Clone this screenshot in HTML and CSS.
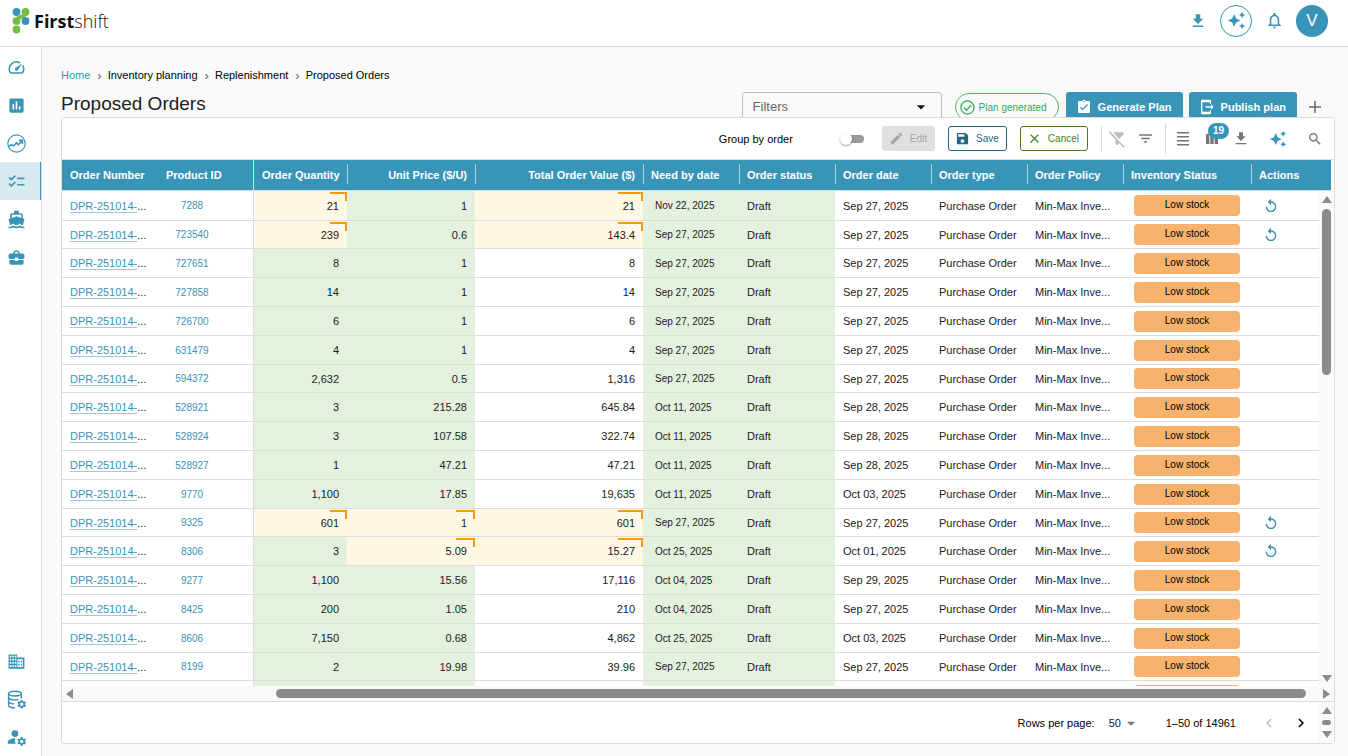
FILE: index.html
```html
<!DOCTYPE html>
<html lang="en">

<head>
    <meta charset="UTF-8">
    <meta name="viewport" content="width=device-width, initial-scale=1.0">
    <title>Proposed Orders</title>
    <link rel="stylesheet" href="styles.css">
</head>

<body>
    <header class="topbar">
        <a class="logo" href="#" aria-label="Firstshift">
            <svg width="18" height="26" viewBox="0 0 18 26">
                <path d="M13.5 4C13.5 11 4.500 7 4.500 13" stroke="#76bd43" stroke-width="4" fill="none" />
                <circle cx="4.500" cy="4" r="3.900" fill="#3895b8" />
                <circle cx="13.500" cy="4" r="3.900" fill="#76bd43" />
                <circle cx="4.500" cy="13" r="3.900" fill="#76bd43" />
                <circle cx="13.500" cy="13" r="3.900" fill="#3895b8" />
                <circle cx="4.500" cy="21.500" r="3.900" fill="#76bd43" />
            </svg>
            <span class="logo-text"><b>First</b>shift</span>
        </a>
        <div class="topbar-actions">
            <button class="top-btn" aria-label="Downloads">
                <svg width="18" height="18" viewBox="0 0 24 24"><path d="M5 20h14v-2H5v2zM19 9h-4V3H9v6H5l7 7 7-7z" /></svg>
            </button>
            <button class="top-btn ringed" aria-label="Assistant">
                <svg width="19" height="19" viewBox="0 0 24 24"><path d="M19 9l1.250-2.750L23 5l-2.750-1.250L19 1l-1.250 2.750L15 5l2.750 1.250L19 9zm-7.500.5L9 4 6.500 9.500 1 12l5.500 2.500L9 20l2.500-5.500L17 12l-5.500-2.500zM19 15l-1.250 2.750L15 19l2.750 1.250L19 23l1.250-2.750L23 19l-2.750-1.250L19 15z" /></svg>
            </button>
            <button class="top-btn" aria-label="Notifications">
                <svg width="19" height="19" viewBox="0 0 24 24"><path d="M12 22c1.100 0 2-.9 2-2h-4c0 1.100.89 2 2 2zm6-6v-5c0-3.070-1.640-5.640-4.500-6.320V4c0-.83-.67-1.500-1.500-1.500s-1.500.67-1.500 1.500v.68C7.630 5.360 6 7.920 6 11v5l-2 2v1h16v-1l-2-2zm-2 1H8v-6c0-2.480 1.510-4.500 4-4.500s4 2.020 4 4.500v6z" /></svg>
            </button>
            <button class="avatar">V</button>
        </div>
    </header>

    <div class="layout">
        <nav class="sidebar">
            <a href="#" aria-label="Dashboard"><svg viewBox="0 0 24 24"><path d="M20.380 8.570l-1.230 1.850a8 8 0 0 1-.22 7.580H5.070A8 8 0 0 1 15.580 6.850l1.850-1.230A10 10 0 0 0 3.350 19a2 2 0 0 0 1.720 1h13.850a2 2 0 0 0 1.740-1 10 10 0 0 0-.27-10.440zM10.590 15.410a2 2 0 0 0 2.830 0l5.660-8.490-8.490 5.660a2 2 0 0 0 0 2.830z" /></svg></a>
            <a href="#" aria-label="Reports"><svg viewBox="0 0 24 24"><path d="M19 3H5c-1.100 0-2 .9-2 2v14c0 1.100.9 2 2 2h14c1.100 0 2-.9 2-2V5c0-1.100-.9-2-2-2zM9 17H7v-7h2v7zm4 0h-2V7h2v10zm4 0h-2v-4h2v4z" /></svg></a>
            <a href="#" aria-label="Demand"><svg viewBox="0 0 24 24" class="line"><circle cx="12" cy="12" r="11" stroke-width="1.500" /><path d="M2 16l3.500-2.500 3 1.500 3.500-4 2.500 2.500L19 8.500M15 8h4.500v4.500" stroke-width="2" /></svg></a>
            <a href="#" class="active" aria-label="Inventory planning"><svg viewBox="0 0 24 24"><path d="M22 7h-9v2h9V7zm0 8h-9v2h9v-2zM5.540 11L2 7.460l1.410-1.410 2.120 2.120 4.240-4.240 1.410 1.410L5.540 11zm0 8L2 15.460l1.410-1.410 2.120 2.120 4.240-4.240 1.410 1.410L5.540 19z" /></svg></a>
            <a href="#" aria-label="Shipments"><svg viewBox="0 0 24 24"><path d="M20 21c-1.390 0-2.780-.47-4-1.320-2.440 1.710-5.560 1.710-8 0C6.780 20.530 5.390 21 4 21H2v2h2c1.380 0 2.740-.35 4-.99 2.520 1.290 5.480 1.290 8 0 1.260.65 2.620.99 4 .99h2v-2h-2zM3.950 19H4c1.600 0 3.020-.88 4-2 .98 1.120 2.400 2 4 2s3.020-.88 4-2c.98 1.120 2.400 2 4 2h.05l1.890-6.680c.08-.26.06-.54-.06-.78s-.34-.42-.6-.5L20 10.620V6c0-1.100-.9-2-2-2h-3V1H9v3H6c-1.100 0-2 .9-2 2v4.620l-1.290.42c-.26.08-.48.26-.6.5s-.15.52-.06.78L3.950 19zM6 6h12v3.970L12 8 6 9.970V6z" /></svg></a>
            <a href="#" aria-label="Business"><svg viewBox="0 0 24 24"><path d="M10 16v-1H3.010L3 19c0 1.110.89 2 2 2h14c1.110 0 2-.89 2-2v-4h-7v1h-4zm10-9h-4.010V5l-2-2h-4l-2 2v2H4c-1.100 0-2 .9-2 2v3c0 1.110.89 2 2 2h6v-2h4v2h6c1.100 0 2-.9 2-2V9c0-1.100-.9-2-2-2zm-6 0h-4V5h4v2z" /></svg></a>
            <div class="spacer"></div>
            <a href="#" aria-label="Company"><svg viewBox="0 0 24 24"><path fill-rule="evenodd" d="M2 3h11v4h9v14H2V3zm1.500 1.700v2.300h2V4.700h-2zm3.200 0v2.300h2V4.700h-2zm3.200 0v2.300h2V4.700h-2zM3.500 8.500v2.300h2V8.500h-2zm3.200 0v2.300h2V8.500h-2zm3.200 0v2.300h2V8.500h-2zM3.500 12.500v2.300h2v-2.300h-2zm3.200 0v2.300h2v-2.300h-2zm3.200 0v2.300h2v-2.300h-2zM3.500 16.700V19h2v-2.300h-2zm3.200 0V19h2v-2.300h-2zm3.200 0V19h2v-2.300h-2zM13.200 9v10H20V9h-6.800zm1 2h1.800v2h-1.800v-2zm3.300 0h1.500v2h-1.500v-2zm-3.300 4h1.800v2h-1.800v-2zm3.300 0h1.500v2h-1.500v-2z" /></svg></a>
            <a href="#" aria-label="Data settings"><svg viewBox="0 0 24 24"><g class="line" stroke-width="1.800"><ellipse cx="10" cy="4.500" rx="8" ry="3" /><path d="M2 4.500v15c0 1.500 3.500 3 8 3M18 4.500V11M2 9.500c0 1.500 3.500 3 8 3 2 0 3.500-.2 4.500-.6M2 14.500c0 1.500 3.500 3 7 3" /></g><path d="M22.750 18c0-.22-.03-.42-.06-.63l1.300-1.100-1.150-2-1.650.6c-.32-.27-.68-.48-1.080-.63L19.800 12.500h-2.400l-.3 1.740c-.4.15-.76.36-1.080.63l-1.650-.6-1.150 2 1.300 1.100c-.03.21-.06.41-.06.63s.03.42.06.63l-1.300 1.100 1.150 2 1.650-.6c.32.27.68.48 1.080.63l.3 1.740h2.400l.3-1.740c.4-.15.76-.36 1.080-.63l1.650.6 1.150-2-1.300-1.100c.04-.21.07-.41.07-.63zM18.600 20.100a2.100 2.100 0 1 1 0-4.200 2.100 2.100 0 0 1 0 4.200z" /></svg></a>
            <a href="#" aria-label="User settings"><svg viewBox="0 0 24 24"><circle cx="10" cy="7" r="4.300" /><path d="M10.670 13.020C10.450 13.010 10.230 13 10 13c-2.420 0-4.680.67-6.610 1.820C2 15.340 1 16.320 1 17.350V20h10.260C10.470 18.870 10 17.490 10 16c0-1.070.25-2.070.67-2.980z" /><path d="M22.750 17c0-.22-.03-.42-.06-.63l1.300-1.100-1.150-2-1.650.6c-.32-.27-.68-.48-1.080-.63L19.800 11.500h-2.400l-.3 1.740c-.4.15-.76.36-1.080.63l-1.650-.6-1.150 2 1.300 1.100c-.03.21-.06.41-.06.63s.03.42.06.63l-1.300 1.100 1.150 2 1.650-.6c.32.27.68.48 1.080.63l.3 1.740h2.400l.3-1.740c.4-.15.76-.36 1.080-.63l1.650.6 1.150-2-1.300-1.100c.04-.21.07-.41.07-.63zM18.600 19.100a2.100 2.100 0 1 1 0-4.200 2.100 2.100 0 0 1 0 4.200z" /></svg></a>
        </nav>

        <main>
            <div class="breadcrumb">
                <a href="#">Home</a><i>›</i><span>Inventory planning</span><i>›</i><span>Replenishment</span><i>›</i><span>Proposed Orders</span>
            </div>
            <div class="title-row">
                <h1>Proposed Orders</h1>
                <button class="filters">Filters <svg width="20" height="20" viewBox="0 0 24 24"><path d="M7 10l5 5 5-5z" /></svg></button>
                <div class="plan-state">
                    <svg width="15" height="15" viewBox="0 0 24 24"><circle cx="12" cy="12" r="10.500" /><path d="M6.500 12.500l4 4 7.500-8.500" /></svg>
                    Plan generated
                </div>
                <button class="primary"><svg width="16" height="16" viewBox="0 0 24 24"><path d="M19 3h-4.180C14.400 1.840 13.300 1 12 1c-1.300 0-2.400.84-2.820 2H5c-1.100 0-2 .9-2 2v14c0 1.100.9 2 2 2h14c1.100 0 2-.9 2-2V5c0-1.100-.9-2-2-2zm-7 0c.55 0 1 .45 1 1s-.45 1-1 1-1-.45-1-1 .45-1 1-1zm-2 14l-4-4 1.410-1.410L10 14.170l6.590-6.590L18 9l-8 8z" /></svg>Generate Plan</button>
                <button class="primary"><svg width="16" height="16" viewBox="0 0 24 24"><path d="M16 17h2v4c0 1.100-.9 2-2 2H5c-1.100 0-2-.9-2-2V3c0-1.100.9-2 2-2h11c1.100 0 2 .9 2 2v4h-2V5H5v14h11v-2zm6-5l-4-4v3H10v2h8v3l4-4z" /></svg>Publish plan</button>
                <button class="add" aria-label="Add"><svg width="12" height="12" viewBox="0 0 12 12"><path d="M6 0v12M0 6h12" stroke="#666" stroke-width="1.500" /></svg></button>
            </div>

            <section class="card">
                <div class="toolbar">
                    <label for="group">Group by order</label>
                    <input type="checkbox" id="group" class="switch">
                    <button class="tool edit" disabled><svg width="15" height="15" viewBox="0 0 24 24"><path d="M3 17.250V21h3.750L17.810 9.940l-3.750-3.750L3 17.250zM20.710 7.040c.39-.39.39-1.020 0-1.410l-2.340-2.340c-.39-.39-1.020-.39-1.410 0l-1.830 1.830 3.750 3.750 1.830-1.830z" /></svg>Edit</button>
                    <button class="tool save"><svg width="15" height="15" viewBox="0 0 24 24"><path d="M17 3H5c-1.110 0-2 .9-2 2v14c0 1.100.89 2 2 2h14c1.100 0 2-.9 2-2V7l-4-4zm-5 16c-1.660 0-3-1.340-3-3s1.340-3 3-3 3 1.340 3 3-1.340 3-3 3zm3-10H5V5h10v4z" /></svg>Save</button>
                    <button class="tool cancel"><svg width="15" height="15" viewBox="0 0 24 24"><path d="M19 6.410L17.590 5 12 10.590 6.410 5 5 6.410 10.590 12 5 17.590 6.410 19 12 13.410 17.590 19 19 17.590 13.410 12z" /></svg>Cancel</button>
                    <span class="divider"></span>
                    <button class="icon-btn muted" aria-label="Clear filters"><svg width="18" height="18" viewBox="0 0 24 24"><path d="M20.790 5.610C21.300 4.950 20.830 3 20 3H6.830l7.970 8.970 5.990-6.360zM2.810 1.810 1.390 3.220 10 12.830V18c0 1.100.9 2 2 2s2-.9 2-2v-1.170l6.780 6.780 1.410-1.410L2.810 1.810z" /></svg></button>
                    <button class="icon-btn" aria-label="Filter list"><svg width="17" height="17" viewBox="0 0 24 24"><path d="M10 18h4v-2h-4v2zM3 6v2h18V6H3zm3 7h12v-2H6v2z" /></svg></button>
                    <span class="divider tall"></span>
                    <button class="icon-btn" aria-label="Density"><svg width="12" height="14" viewBox="0 0 12 14"><path d="M0 0h12v1.500H0zM0 4h12v1.500H0zM0 8h12v1.500H0zM0 12h12v1.500H0z" /></svg></button>
                    <button class="icon-btn" aria-label="Columns"><svg width="12" height="10" viewBox="0 0 12 10"><path d="M0 0h3.300v10H0zM4.300 0h3.300v10H4.300zM8.600 0H12v10H8.600z" /></svg><span class="badge">19</span></button>
                    <button class="icon-btn" aria-label="Export"><svg width="16" height="16" viewBox="0 0 24 24"><path d="M4 20h16v-2H4v2zM19 8h-4V2H9v6H5l7 7 7-7z" /></svg></button>
                    <button class="icon-btn wide accent" aria-label="Insights"><svg width="18" height="18" viewBox="0 0 24 24"><path d="M19 9l1.250-2.750L23 5l-2.750-1.250L19 1l-1.250 2.750L15 5l2.750 1.250L19 9zm-7.500.5L9 4 6.500 9.500 1 12l5.500 2.500L9 20l2.500-5.500L17 12l-5.500-2.500zM19 15l-1.250 2.750L15 19l2.750 1.250L19 23l1.250-2.750L23 19l-2.750-1.250L19 15z" /></svg></button>
                    <button class="icon-btn wide" aria-label="Search"><svg width="16" height="16" viewBox="0 0 24 24"><path d="M15.500 14h-.79l-.28-.27C15.410 12.590 16 11.110 16 9.500 16 5.910 13.090 3 9.500 3S3 5.910 3 9.500 5.910 16 9.500 16c1.610 0 3.090-.59 4.230-1.570l.27.28v.79l5 4.990L20.490 19l-4.990-5zm-6 0C7.010 14 5 11.990 5 9.500S7.010 5 9.500 5 14 7.010 14 9.500 11.990 14 9.500 14z" /></svg></button>
                </div>

                <div class="grid">
                    <table>
                        <colgroup>
                            <col class="c-order"><col class="c-product"><col class="c-qty"><col class="c-price"><col class="c-total">
                            <col class="c-date"><col class="c-date"><col class="c-date"><col class="c-date"><col class="c-date">
                            <col class="c-stock"><col>
                        </colgroup>
                        <thead>
                            <tr>
                                <th>Order Number</th>
                                <th>Product ID</th>
                                <th class="num edge sep">Order Quantity</th>
                                <th class="num sep">Unit Price ($/U)</th>
                                <th class="num sep">Total Order Value ($)</th>
                                <th class="sep">Need by date</th>
                                <th class="sep">Order status</th>
                                <th class="sep">Order date</th>
                                <th class="sep">Order type</th>
                                <th class="sep">Order Policy</th>
                                <th class="sep">Inventory Status</th>
                                <th>Actions</th>
                            </tr>
                        </thead>
                        <tbody id="orders"></tbody>
                    </table>
                    <div class="vscroll">
                        <span class="up"></span>
                        <div class="track"><div class="thumb"></div></div>
                        <span class="down"></span>
                    </div>
                </div>

                <div class="hscroll">
                    <span class="left"></span>
                    <div class="track"><div class="thumb"></div></div>
                    <span class="right"></span>
                </div>

                <div class="pager">
                    <label for="rows">Rows per page:</label>
                    <div class="rows-select">
                        <select id="rows"><option>50</option><option>100</option></select>
                        <svg width="16" height="16" viewBox="0 0 24 24"><path d="M6 10l6 6 6-6z" /></svg>
                    </div>
                    <span class="range">1–50 of 14961</span>
                    <button disabled aria-label="Previous page"><svg width="18" height="18" viewBox="0 0 24 24"><path d="M15.410 7.410L14 6l-6 6 6 6 1.410-1.410L10.830 12z" /></svg></button>
                    <button aria-label="Next page"><svg width="18" height="18" viewBox="0 0 24 24"><path d="M10 6L8.590 7.410 13.170 12l-4.580 4.590L10 18l6-6z" /></svg></button>
                    <div class="mini-scroll"><span class="up"></span><div class="thumb"></div><span class="down"></span></div>
                </div>
            </section>
        </main>
    </div>

<script>
    // product, quantity, price, total, need by, order date, edited columns
    const orders = [
        ['7288', '21', '1', '21', 'Nov 22, 2025', 'Sep 27, 2025', 'qt'],
        ['723540', '239', '0.6', '143.4', 'Sep 27, 2025', 'Sep 27, 2025', 'qt'],
        ['727651', '8', '1', '8', 'Sep 27, 2025', 'Sep 27, 2025', ''],
        ['727858', '14', '1', '14', 'Sep 27, 2025', 'Sep 27, 2025', ''],
        ['726700', '6', '1', '6', 'Sep 27, 2025', 'Sep 27, 2025', ''],
        ['631479', '4', '1', '4', 'Sep 27, 2025', 'Sep 27, 2025', ''],
        ['594372', '2,632', '0.5', '1,316', 'Sep 27, 2025', 'Sep 27, 2025', ''],
        ['528921', '3', '215.28', '645.84', 'Oct 11, 2025', 'Sep 28, 2025', ''],
        ['528924', '3', '107.58', '322.74', 'Oct 11, 2025', 'Sep 28, 2025', ''],
        ['528927', '1', '47.21', '47.21', 'Oct 11, 2025', 'Sep 28, 2025', ''],
        ['9770', '1,100', '17.85', '19,635', 'Oct 11, 2025', 'Oct 03, 2025', ''],
        ['9325', '601', '1', '601', 'Sep 27, 2025', 'Sep 27, 2025', 'qpt'],
        ['8306', '3', '5.09', '15.27', 'Oct 25, 2025', 'Oct 01, 2025', 'pt'],
        ['9277', '1,100', '15.56', '17,116', 'Oct 04, 2025', 'Sep 29, 2025', ''],
        ['8425', '200', '1.05', '210', 'Oct 04, 2025', 'Sep 27, 2025', ''],
        ['8606', '7,150', '0.68', '4,862', 'Oct 25, 2025', 'Oct 03, 2025', ''],
        ['8199', '2', '19.98', '39.96', 'Sep 27, 2025', 'Sep 27, 2025', '']
    ];

    const undo = '<button class="undo" aria-label="Undo"><svg width="16" height="16" viewBox="0 0 24 24"><path d="M12 5V1L7 6l5 5V7c3.310 0 6 2.690 6 6s-2.690 6-6 6-6-2.690-6-6H4c0 4.420 3.580 8 8 8s8-3.580 8-8-3.580-8-8-8z"/></svg></button>';

    function numCell(value, key, edited, cls) {
        return `<td class="num ${cls} ${edited.includes(key) ? 'edited' : ''}">${value}</td>`;
    }

    const rows = orders.map(([id, qty, price, total, need, date, edited]) => `
        <tr>
            <td><a class="order" href="#">DPR-251014-</a>...</td>
            <td><a class="product" href="#">${id}</a></td>
            ${numCell(qty, 'q', edited, 'edge editable')}
            ${numCell(price, 'p', edited, 'editable')}
            ${numCell(total, 't', edited, '')}
            <td class="editable need">${need}</td>
            <td class="editable">Draft</td>
            <td>${date}</td>
            <td>Purchase Order</td>
            <td>Min-Max Inve...</td>
            <td class="stock"><span>Low stock</span></td>
            <td>${edited ? undo : ''}</td>
        </tr>`);

    rows.push(`
        <tr>
            <td></td><td></td>
            <td class="edge editable"></td><td class="editable"></td><td></td>
            <td class="editable"></td><td class="editable"></td>
            <td></td><td></td><td></td>
            <td class="stock"><span></span></td><td></td>
        </tr>`);

    document.getElementById('orders').innerHTML = rows.join('');
</script>
</body>

</html>
```

FILE: styles.css
```css
* {
  box-sizing: border-box;
}

body {
  margin: 0;
  height: 100vh;
  display: flex;
  flex-direction: column;
  overflow: hidden;
  background: #fafafa;
  color: #212121;
  font-family: "Liberation Sans", Arial, sans-serif;
  font-size: 11px;
}

button,
select {
  font: inherit;
  color: inherit;
  border: 0;
  padding: 0;
  background: none;
  cursor: pointer;
}

a {
  color: #3895b8;
  text-decoration: none;
}

svg {
  display: block;
  flex: none;
  fill: currentColor;
}

/* top bar */
.topbar {
  display: flex;
  align-items: center;
  justify-content: space-between;
  height: 47px;
  padding: 0 20px 5px 12px;
  background: #fff;
  border-bottom: 1px solid #dcdcdc;
}

.logo {
  display: flex;
  align-items: center;
  gap: 4px;
  color: #111;
}

.logo-text {
  font-family: "Open Sans", sans-serif;
  font-size: 18px;
  font-weight: 300;
  line-height: 24px;
}

.logo-text b {
  font-weight: 700;
}

.topbar-actions {
  display: flex;
  align-items: center;
  color: #3895b8;
}

.top-btn {
  display: flex;
  align-items: center;
  justify-content: center;
  width: 44px;
  height: 32px;
}

.top-btn.ringed {
  width: 32px;
  border: 1px solid #3895b8;
  border-radius: 50%;
}

.avatar {
  width: 32px;
  height: 32px;
  border-radius: 50%;
  background: #3895b8;
  color: #fff;
  font-size: 17px;
}

.layout {
  display: flex;
  flex: 1;
  min-height: 0;
}

/* sidebar */
.sidebar {
  display: flex;
  flex-direction: column;
  width: 42px;
  padding: 1px 0 0;
  background: #fff;
  border-right: 1px solid #dcdcdc;
}

.sidebar a {
  display: flex;
  align-items: center;
  height: 38px;
  padding-left: 7px;
}

.sidebar a.active {
  background: #d7eaf0;
  border-right: 1px solid #3895b8;
}

.sidebar svg {
  width: 19px;
  height: 19px;
}

.sidebar .line {
  fill: none;
  stroke: currentColor;
}

.spacer {
  flex: 1;
}

/* page head */
main {
  display: flex;
  flex-direction: column;
  flex: 1;
  min-width: 0;
  padding: 20px 13px 12px 19px;
}

.breadcrumb {
  display: flex;
  align-items: center;
  height: 16px;
  margin-bottom: 9px;
  color: #000;
}

.breadcrumb i {
  margin: 0 6px 0 7px;
  font-style: normal;
  font-size: 13px;
  color: #666;
}

.title-row {
  display: flex;
  align-items: flex-start;
  height: 25px;
}

h1 {
  flex: 1;
  margin: 0;
  font-size: 19px;
  font-weight: 400;
  line-height: 24px;
}

.filters {
  display: flex;
  align-items: center;
  justify-content: space-between;
  width: 200px;
  height: 29px;
  padding: 0 10px;
  border: 1px solid #bdbdbd;
  border-radius: 3px;
  color: #666;
  font-size: 13px;
}

.filters svg {
  color: #111;
}

.plan-state {
  display: flex;
  align-items: center;
  gap: 4px;
  width: 104px;
  height: 28px;
  margin: 1px 7px 0 13px;
  padding-left: 4px;
  border: 1px solid #55b56d;
  border-radius: 14px;
  color: #34a853;
  font-size: 10px;
  white-space: nowrap;
}

.plan-state svg {
  fill: none;
  stroke: currentColor;
  stroke-width: 2;
}

.primary {
  display: flex;
  align-items: center;
  gap: 6px;
  height: 29px;
  margin-right: 6px;
  padding: 0 11px 0 10px;
  border-radius: 3px;
  background: #3895b8;
  color: #fff;
  font-weight: 700;
  white-space: nowrap;
}

.add {
  display: flex;
  align-items: center;
  justify-content: center;
  width: 24px;
  height: 29px;
  margin-right: 8px;
}

/* card */
.card {
  position: relative;
  display: flex;
  flex-direction: column;
  flex: 1;
  min-height: 0;
  background: #fff;
  border: 1px solid #dcdcdc;
  border-radius: 3px;
}

.toolbar {
  display: flex;
  align-items: center;
  justify-content: flex-end;
  height: 42px;
  padding-right: 1px;
  border-bottom: 1px solid #dcdcdc;
}

.toolbar label {
  color: #000;
}

.switch {
  appearance: none;
  position: relative;
  width: 20px;
  height: 8px;
  margin: 0 18px 0 51px;
  border-radius: 4px;
  background: #999;
}

.switch::before {
  content: "";
  position: absolute;
  left: -4px;
  top: -2px;
  width: 12px;
  height: 12px;
  border-radius: 50%;
  background: #fff;
  box-shadow: 0 1px 2px rgba(0, 0, 0, 0.4);
}

.tool {
  display: flex;
  align-items: center;
  gap: 6px;
  height: 25px;
  margin-right: 13px;
  padding: 0 7px 0 6px;
  border: 1px solid;
  border-radius: 3px;
  font-size: 10px;
}

.tool.edit {
  border-color: #e0e0e0;
  background: #e0e0e0;
  color: #a6a6a6;
}

.tool.save {
  color: #1f6885;
}

.tool.cancel {
  padding-right: 8px;
  color: #43811d;
}

.divider {
  width: 1px;
  height: 25px;
  background: #dcdcdc;
}

.divider.tall {
  height: 31px;
  margin: 0 2px 0 5px;
}

.icon-btn {
  position: relative;
  display: flex;
  align-items: center;
  justify-content: center;
  width: 29px;
  height: 30px;
  color: #757575;
}

.icon-btn.wide {
  width: 37px;
}

.icon-btn.muted {
  color: #bdbdbd;
}

.icon-btn.accent {
  margin-left: 4px;
  color: #3895b8;
}

.badge {
  position: absolute;
  top: -1px;
  right: -3px;
  width: 21px;
  height: 16px;
  border-radius: 8px;
  background: #3895b8;
  color: #fff;
  font-size: 10px;
  font-weight: 700;
  line-height: 16px;
}

/* table */
.grid {
  position: relative;
  flex: 1;
  min-height: 0;
  overflow: hidden;
}

table {
  width: calc(100% - 3px);
  table-layout: fixed;
  border-collapse: separate;
  border-spacing: 0;
}

.c-order,
.c-date {
  width: 96px;
}

.c-product {
  width: 95px;
}

.c-qty {
  width: 94px;
}

.c-price,
.c-stock {
  width: 128px;
}

.c-total {
  width: 168px;
}

th,
td {
  position: relative;
  height: 29px;
  padding: 0 8px;
  border-bottom: 1px solid #dcdcdc;
  text-align: left;
  white-space: nowrap;
}

th {
  height: 31px;
  background: #3895b8;
  color: #fff;
}

th.sep::after {
  content: "";
  position: absolute;
  top: 4px;
  right: -1px;
  width: 1px;
  height: 20px;
  background: #a8d0df;
  z-index: 1;
}

/* rows are 28.8px on average */
tbody tr:first-child td {
  height: 30px;
}

tbody tr:nth-child(5n + 2) td {
  height: 28px;
}

.num {
  text-align: right;
}

.edge {
  border-left: 1px solid #dcdcdc;
}

.editable {
  background: #e4f1de;
}

.edited {
  background: #fff8e5;
}

.edited::after {
  content: "";
  position: absolute;
  box-sizing: border-box;
  top: 1px;
  right: 0;
  width: 15%;
  min-width: 17px;
  height: 9px;
  border-top: 2px solid #ff9800;
  border-right: 2px solid #ff9800;
}

.need {
  padding-left: 12px;
  font-size: 10px;
}

.order {
  text-decoration: underline;
  text-decoration-color: #9ccadb;
  text-underline-offset: 2px;
}

.product {
  display: block;
  width: 52px;
  font-size: 10px;
  text-align: center;
}

.stock {
  padding: 0 11px;
}

.stock span {
  display: block;
  height: 21px;
  border-radius: 4px;
  background: #f7b26d;
  color: #000;
  font-size: 10px;
  line-height: 20px;
  text-align: center;
}

.undo {
  display: block;
  margin-left: 4px;
  color: #3895b8;
}

/* scrollbars */
.track {
  flex: 1;
}

.thumb {
  border-radius: 5px;
  background: #8b8b8b;
}

.up,
.down,
.left,
.right {
  border: 5px solid transparent;
}

.up {
  border-top: 0;
  border-bottom: 7px solid #8b8b8b;
}

.down {
  border-bottom: 0;
  border-top: 7px solid #8b8b8b;
}

.left {
  border-left: 0;
  border-right: 7px solid #8b8b8b;
}

.right {
  border-right: 0;
  border-left: 7px solid #8b8b8b;
}

.vscroll {
  position: absolute;
  top: 31px;
  right: 0;
  bottom: 0;
  display: flex;
  flex-direction: column;
  align-items: center;
  gap: 6px;
  width: 15px;
  padding: 5px 0 4px;
  background: #fafafa;
}

.vscroll .thumb {
  width: 9px;
  height: 36%;
}

.vscroll .track {
  min-height: 0;
}

.hscroll {
  display: flex;
  align-items: center;
  gap: 5px;
  height: 15px;
  padding: 0 4px;
  background: #fafafa;
}

.hscroll .thumb {
  width: 83%;
  height: 9px;
  margin-left: 16%;
}

.pager {
  display: flex;
  align-items: center;
  justify-content: flex-end;
  height: 42px;
  border-top: 1px solid #dcdcdc;
  color: #000;
}

.rows-select {
  display: flex;
  align-items: center;
  margin: 0 27px 0 14px;
  color: #222;
}

.rows-select select {
  appearance: none;
  width: 14px;
}

.rows-select svg {
  color: #757575;
}

.range {
  margin-right: 17px;
}

.pager button {
  display: flex;
  align-items: center;
  justify-content: center;
  width: 32px;
  height: 32px;
}

.pager button:disabled {
  color: #bdbdbd;
}

.mini-scroll {
  display: flex;
  flex-direction: column;
  align-items: center;
  justify-content: center;
  gap: 6px;
  width: 15px;
  height: 100%;
  margin-left: 2px;
  background: #fafafa;
}

.mini-scroll .thumb {
  width: 9px;
  height: 5px;
}
```
